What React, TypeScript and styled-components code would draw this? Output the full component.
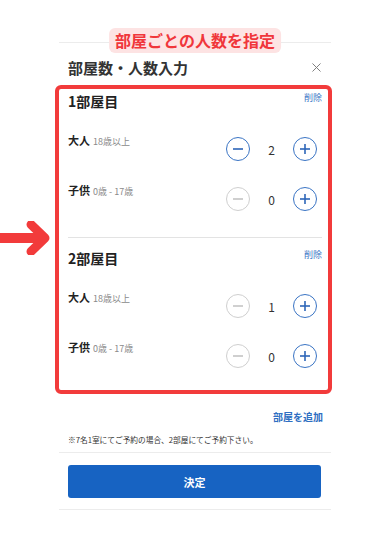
import React, { useState } from 'react';
import styled, { createGlobalStyle } from 'styled-components';
import { X } from 'lucide-react';

const GlobalStyle = createGlobalStyle`
  html, body {
    margin: 0;
    background: #fff;
    font-family: "Noto Sans CJK JP", "Noto Sans", sans-serif;
    color: #222;
  }
`;

interface Guest {
  label: string;
  note: string;
  count: number;
}

const initialRooms: Guest[][] = [
  [
    { label: '大人', note: '18歳以上', count: 2 },
    { label: '子供', note: '0歳 - 17歳', count: 0 },
  ],
  [
    { label: '大人', note: '18歳以上', count: 1 },
    { label: '子供', note: '0歳 - 17歳', count: 0 },
  ],
];

const MinMark = () => (
  <svg width="14" height="14" viewBox="0 0 14 14">
    <line x1="2" y1="7" x2="12" y2="7" stroke="currentColor" strokeWidth="1.6" />
  </svg>
);

const PlusMark = () => (
  <svg width="14" height="14" viewBox="0 0 14 14">
    <line x1="2" y1="7" x2="12" y2="7" stroke="currentColor" strokeWidth="1.6" />
    <line x1="7" y1="2" x2="7" y2="12" stroke="currentColor" strokeWidth="1.6" />
  </svg>
);

const App: React.FC = () => {
  const [rooms, setRooms] = useState(initialRooms);

  const change = (r: number, g: number, d: number) => {
    setRooms(rooms.map((room, ri) => room.map((guest, gi) => (
      ri === r && gi === g ? { ...guest, count: Math.max(0, guest.count + d) } : guest
    ))));
  };

  // adults need at least one per room
  const minFor = (g: number) => (g === 0 ? 1 : 0);

  return (
    <Page>
      <GlobalStyle />
      <Sheet>
        <Badge>部屋ごとの人数を指定</Badge>

        <TitleRow>
          <Title>部屋数・人数入力</Title>
          <Close><X size={15} strokeWidth={1.5} /></Close>
        </TitleRow>

        <Highlight>
          <Arrow width="52" height="34" viewBox="0 0 52 34">
            <rect x="0" y="12" width="40" height="10" fill="#f23b3b" />
            <polyline points="31,3.5 45,17 31,30.5" fill="none" stroke="#f23b3b" strokeWidth="9" strokeLinecap="round" strokeLinejoin="round" />
          </Arrow>

          {rooms.map((room, ri) => (
            <Room key={ri} first={ri === 0}>
              <RoomHeader>
                <RoomTitle>{ri + 1}部屋目</RoomTitle>
                <Remove>削除</Remove>
              </RoomHeader>
              <Guests>
                {room.map((guest, gi) => {
                  const canDec = guest.count > minFor(gi);
                  return (
                    <GuestRow key={gi}>
                      <GuestLabel>
                        {guest.label}<GuestNote>{guest.note}</GuestNote>
                      </GuestLabel>
                      <Stepper>
                        <CircleButton active={canDec} onClick={() => canDec && change(ri, gi, -1)}>
                          <MinMark />
                        </CircleButton>
                        <Count>{guest.count}</Count>
                        <CircleButton active onClick={() => change(ri, gi, 1)}>
                          <PlusMark />
                        </CircleButton>
                      </Stepper>
                    </GuestRow>
                  );
                })}
              </Guests>
            </Room>
          ))}
        </Highlight>

        <AddRow>
          <AddRoom>部屋を追加</AddRoom>
        </AddRow>
        <Note>※7名1室にてご予約の場合、2部屋にてご予約下さい。</Note>

        <Footer>
          <Submit>決定</Submit>
        </Footer>
      </Sheet>
    </Page>
  );
};

const Page = styled.div`
  padding-top: 42px;
  height: 508px;
  overflow: hidden;
`;

const Sheet = styled.div`
  position: relative;
  width: 272px;
  margin: 0 auto;
  padding: 0 10px 0 9px;
  box-sizing: border-box;
  border-top: 1px solid #ececec;
`;

const Badge = styled.div`
  position: absolute;
  top: -15px;
  left: 50%;
  transform: translateX(-50%);
  white-space: nowrap;
  padding: 0 6px;
  height: 25px;
  line-height: 25px;
  border-radius: 6px;
  background: #fde3e3;
  color: #f0363b;
  font-size: 16px;
  font-weight: 700;
`;

const TitleRow = styled.div`
  display: flex;
  align-items: center;
  justify-content: space-between;
  height: 22px;
  margin-top: 13px;
`;

const Title = styled.h1`
  margin: 0;
  font-size: 15px;
  font-weight: 700;
  color: #333;
`;

const Close = styled.span`
  display: flex;
  color: #777;
  margin-right: -3px;
`;

const Highlight = styled.div`
  position: relative;
  margin: 7px -11px 0 -13px;
  padding: 0 6px 0 9px;
  border: 4px solid #f23b3b;
  border-radius: 6px;
`;

const Arrow = styled.svg`
  position: absolute;
  left: -59px;
  top: 132px;
`;

const Room = styled.div<{ first?: boolean }>`
  padding: ${p => (p.first ? '0 0 4px' : '8px 0 0')};
  border-top: ${p => (p.first ? 'none' : '1px solid #e3e3e3')};
`;

const RoomHeader = styled.div`
  display: flex;
  justify-content: space-between;
  align-items: flex-start;
  height: 24px;
`;

const RoomTitle = styled.h2`
  margin: 0;
  font-size: 14px;
  line-height: 24px;
  font-weight: 700;
`;

const Remove = styled.button`
  border: none;
  background: none;
  padding: 0;
  margin-top: 2px;
  font-family: inherit;
  font-size: 9px;
  color: #3c78c6;
`;

const Guests = styled.div`
  margin-top: 20px;
`;

const GuestRow = styled.div`
  display: flex;
  justify-content: space-between;
  align-items: flex-start;
  height: 50px;
  padding-right: 5px;
`;

const GuestLabel = styled.div`
  font-size: 11px;
  line-height: 14px;
  font-weight: 700;
  color: #222;
`;

const GuestNote = styled.span`
  margin-left: 3px;
  font-size: 9px;
  font-weight: 400;
  color: #8a8a8a;
`;

const Stepper = styled.div`
  display: flex;
  align-items: center;
  margin-top: 4px;
`;

const CircleButton = styled.button<{ active?: boolean }>`
  display: flex;
  align-items: center;
  justify-content: center;
  width: 24px;
  height: 24px;
  padding: 0;
  border-radius: 50%;
  background: #fff;
  border: 1.3px solid ${p => (p.active ? '#3a74c4' : '#cfcfcf')};
  color: ${p => (p.active ? '#2e66b8' : '#c4c4c4')};
`;

const Count = styled.span`
  width: 43px;
  text-align: center;
  font-size: 12px;
  color: #333;
`;

const AddRow = styled.div`
  display: flex;
  justify-content: flex-end;
  margin: 15px -2px 0 0;
`;

const AddRoom = styled.button`
  border: none;
  background: none;
  padding: 0;
  font-family: inherit;
  font-size: 10px;
  line-height: 15px;
  font-weight: 700;
  color: #2f6fc2;
`;

const Note = styled.p`
  margin: 9px 0 0;
  font-size: 7.7px;
  line-height: 14px;
  color: #333;
`;

const Footer = styled.div`
  margin: 5px -10px 0 -9px;
  padding: 12px 10px 11px 9px;
  border-top: 1px solid #ececec;
  border-bottom: 1px solid #ececec;
`;

const Submit = styled.button`
  display: block;
  width: 100%;
  height: 33px;
  border: none;
  border-radius: 3px;
  background: #1763c2;
  color: #fff;
  font-family: inherit;
  font-size: 11px;
  font-weight: 700;
`;

export default App;
